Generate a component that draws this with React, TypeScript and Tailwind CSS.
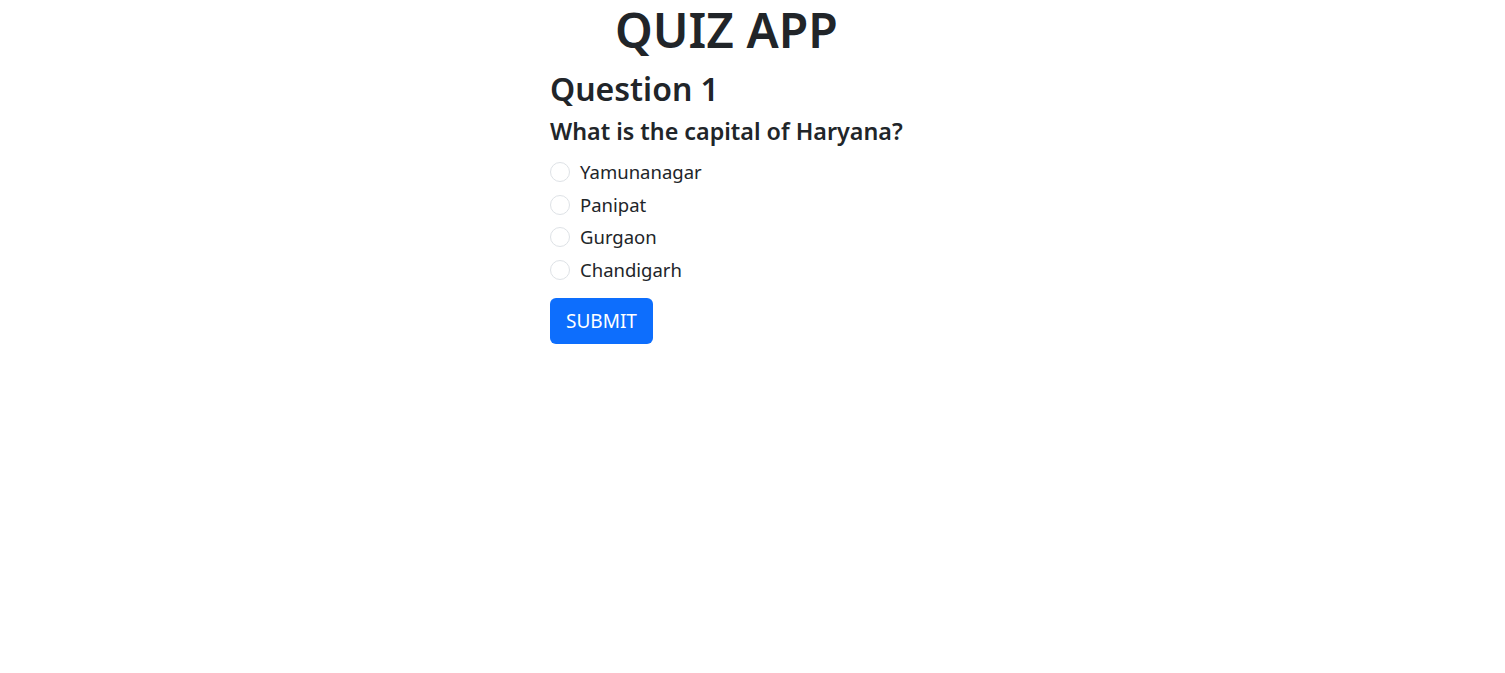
const options = ["Yamunanagar", "Panipat", "Gurgaon", "Chandigarh"];

export default function App() {
  return (
    <div className="min-h-screen bg-white text-[#212529] font-['Noto_Sans',sans-serif]">
      <div className="pl-[550px]">
        <div className="w-fit whitespace-nowrap">
          <h1 className="pt-[1px] text-center text-[48px] font-semibold leading-[1.2]">QUIZ APP</h1>
          <h2 className="mt-[11px] text-[32px] font-semibold leading-[1.2]">Question 1</h2>
          <h4 className="mt-[10px] text-[23.3px] font-semibold leading-[1.2]">What is the capital of Haryana?</h4>
          <div className="mt-[11px] flex flex-col gap-[2.7px]">
            {options.map((opt) => (
              <label key={opt} className="flex items-center gap-[10px] text-[18.5px] leading-[30px]">
                <input
                  type="radio"
                  name="q1"
                  className="appearance-none w-[20px] h-[20px] rounded-full border border-[#dee2e6] bg-white"
                />
                <span>{opt}</span>
              </label>
            ))}
          </div>
          <button className="mt-[13px] bg-[#0d6efd] text-white text-[19px] leading-[30px] px-[16px] py-[8px] rounded-[6px]">
            SUBMIT
          </button>
        </div>
      </div>
    </div>
  );
}
